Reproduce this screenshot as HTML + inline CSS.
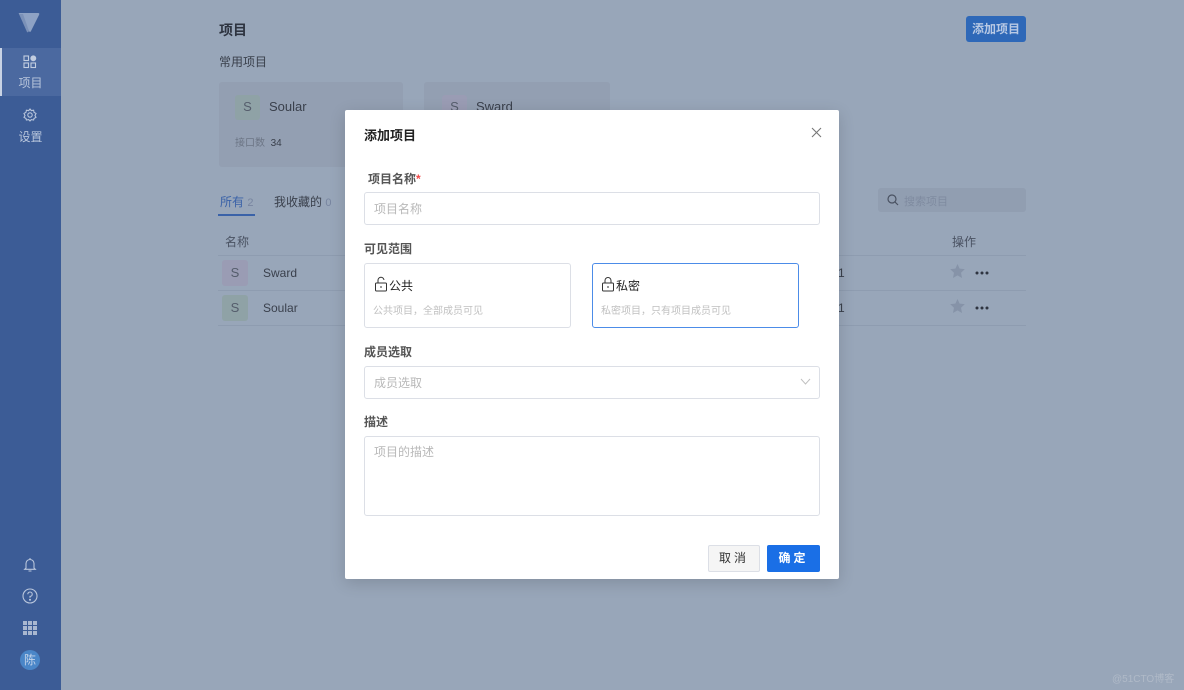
<!DOCTYPE html>
<html><head><meta charset="utf-8"><style>
*{box-sizing:border-box;margin:0;padding:0}
body{width:1184px;height:690px;overflow:hidden;position:relative;background:#98a6b9;font-family:"Liberation Sans","Noto Sans CJK SC",sans-serif;font-size:12px;color:#333}
.a{position:absolute}
.side{left:0;top:0;width:61px;height:690px;background:#3c5c96}
.ic{color:#b9c6dc;font-size:12px;text-align:center;width:61px}
.sq{width:24px;height:24px;border-radius:3px;text-align:center;line-height:24px;font-size:13px;color:#555d6c}
.line{height:1px;background:#8e9cb0;left:218px;width:808px}
.modal{left:345px;top:110px;width:494px;height:469px;background:#fff;border-radius:2px;box-shadow:0 4px 16px rgba(0,0,0,.15)}
.lab{font-size:12px;color:#555;font-weight:bold}
.inp{border:1px solid #dcdfe6;border-radius:3px;color:#b8b8b8;font-size:12px;padding-left:9px}
.dots{width:14px;height:4px}
</style></head><body>
<div class="a side"></div>
<svg class="a" style="left:17px;top:12px" width="24" height="22" viewBox="0 0 24 22"><path d="M2 2 Q1 1 3 1 L21 1 Q23 1 22 3 L14 19 Q13 21 12 19 Z" fill="#8ea2c4"/><path d="M2 2 L10 20 Q11 21 12 19 L6 2 Z" fill="#7b91b8"/></svg>
<div class="a" style="left:0;top:48px;width:61px;height:48px;background:#4b69a0"></div>
<div class="a" style="left:0;top:48px;width:2px;height:48px;background:#c9d3e4"></div>
<svg class="a" style="left:23px;top:55px" width="14" height="14" viewBox="0 0 14 14" fill="none" stroke="#c2cde0" stroke-width="1.1"><rect x="1" y="1" width="4.5" height="4.5"/><rect x="1" y="8" width="4.5" height="4.5"/><rect x="8" y="8" width="4.5" height="4.5"/><circle cx="10.3" cy="3.3" r="2.4" fill="#c2cde0"/></svg>
<div class="a ic" style="top:74px">项目</div>
<svg class="a" style="left:23px;top:108px" width="14" height="14" viewBox="0 0 14 14" fill="none" stroke="#b9c6dc" stroke-width="1.1"><circle cx="7" cy="7" r="2.2"/><path d="M7 1 L8.3 2.6 L10.6 2.2 L11 4.3 L13 5.5 L12 7.5 L13 9.3 L11 10.5 L10.6 12 L8.3 11.6 L7 13 L5.7 11.6 L3.4 12 L3 10.5 L1 9.3 L2 7.5 L1 5.5 L3 4.3 L3.4 2.2 L5.7 2.6 Z"/></svg>
<div class="a ic" style="top:128px">设置</div>
<svg class="a" style="left:23px;top:557px" width="14" height="16" viewBox="0 0 14 16" fill="none" stroke="#b9c6dc" stroke-width="1.1"><path d="M3 11 V6.5 A4 4 0 0 1 11 6.5 V11 L12.3 12.3 H1.7 Z M5.5 14 H8.5 M7 1 V2.3"/></svg>
<svg class="a" style="left:22px;top:588px" width="16" height="16" viewBox="0 0 16 16" fill="none" stroke="#b9c6dc" stroke-width="1.1"><circle cx="8" cy="8" r="7"/><path d="M5.8 6.2 A2.2 2.2 0 1 1 8 8.4 V9.8"/><circle cx="8" cy="11.8" r=".5" fill="#b9c6dc"/></svg>
<svg class="a" style="left:23px;top:621px" width="14" height="14" viewBox="0 0 14 14" fill="#a9b7d0"><rect x="0" y="0" width="4" height="4"/><rect x="5" y="0" width="4" height="4"/><rect x="10" y="0" width="4" height="4"/><rect x="0" y="5" width="4" height="4"/><rect x="5" y="5" width="4" height="4"/><rect x="10" y="5" width="4" height="4"/><rect x="0" y="10" width="4" height="4"/><rect x="5" y="10" width="4" height="4"/><rect x="10" y="10" width="4" height="4"/></svg>
<div class="a" style="left:20px;top:650px;width:20px;height:20px;border-radius:50%;background:#4a86c8;color:#c4d4ea;text-align:center;line-height:20px;font-size:12px">陈</div>

<div class="a" style="left:219px;top:20px;font-size:14px;font-weight:bold;color:#2e3440">项目</div>
<div class="a" style="left:219px;top:53px;font-size:12px;color:#3a404c">常用项目</div>
<div class="a" style="left:966px;top:16px;width:60px;height:26px;background:#2e68b8;border-radius:3px;color:#b8c9e4;text-align:center;line-height:26px;font-weight:bold">添加项目</div>
<div class="a" style="left:219px;top:82px;width:184px;height:85px;background:#939fb2;border-radius:3px"></div>
<div class="a" style="left:424px;top:82px;width:186px;height:85px;background:#939fb2;border-radius:3px"></div>
<div class="a sq" style="left:235px;top:95px;background:#8fa2a6;width:25px;height:25px">S</div>
<div class="a" style="left:269px;top:99px;font-size:13px;color:#3a404c">Soular</div>
<div class="a" style="left:235px;top:134px;font-size:10px;color:#6c7585">接口数 &nbsp;<span style="color:#3a404c">34</span></div>
<div class="a sq" style="left:442px;top:95px;background:#9a9cb4;width:25px;height:25px">S</div>
<div class="a" style="left:476px;top:99px;font-size:13px;color:#3a404c">Sward</div>

<div class="a" style="left:220px;top:193px;color:#3a62a8">所有 <span style="color:#7885a0;font-size:11px">2</span></div>
<div class="a" style="left:218px;top:214px;width:37px;height:2px;background:#3a62a8"></div>
<div class="a" style="left:274px;top:193px;color:#3a404c">我收藏的 <span style="color:#7885a0;font-size:11px">0</span></div>
<div class="a" style="left:878px;top:188px;width:148px;height:24px;background:#919eb1;border-radius:3px"></div>
<svg class="a" style="left:887px;top:194px" width="12" height="12" viewBox="0 0 12 12" fill="none" stroke="#4a5262" stroke-width="1.2"><circle cx="5" cy="5" r="4"/><path d="M8 8 L11 11"/></svg>
<div class="a" style="left:904px;top:193px;color:#7f8ba0;font-size:11px">搜索项目</div>
<div class="a" style="left:225px;top:233px;color:#4a5262">名称</div>
<div class="a" style="left:952px;top:233px;color:#4a5262">操作</div>
<div class="a line" style="top:255px"></div>
<div class="a line" style="top:290px"></div>
<div class="a line" style="top:325px"></div>
<div class="a sq" style="left:222px;top:260px;background:#9a9cb4;width:26px;height:26px;line-height:26px">S</div>
<div class="a" style="left:263px;top:266px;color:#3a404c">Sward</div>
<div class="a sq" style="left:222px;top:295px;background:#8fa2a6;width:26px;height:26px;line-height:26px">S</div>
<div class="a" style="left:263px;top:301px;color:#3a404c">Soular</div>
<div class="a" style="left:838px;top:266px;color:#3a404c">1</div>
<div class="a" style="left:838px;top:301px;color:#3a404c">1</div>
<svg class="a" style="left:950px;top:264px" width="15" height="14" viewBox="0 0 24 23"><path d="M12 0 L15.5 7.5 L24 8.5 L17.8 14.3 L19.4 23 L12 18.7 L4.6 23 L6.2 14.3 L0 8.5 L8.5 7.5 Z" fill="#8693a8"/></svg>
<svg class="a" style="left:950px;top:299px" width="15" height="14" viewBox="0 0 24 23"><path d="M12 0 L15.5 7.5 L24 8.5 L17.8 14.3 L19.4 23 L12 18.7 L4.6 23 L6.2 14.3 L0 8.5 L8.5 7.5 Z" fill="#8693a8"/></svg>
<svg class="a dots" style="left:975px;top:271px" viewBox="0 0 14 4" fill="#2e3440"><circle cx="2" cy="2" r="1.5"/><circle cx="7" cy="2" r="1.5"/><circle cx="12" cy="2" r="1.5"/></svg>
<svg class="a dots" style="left:975px;top:306px" viewBox="0 0 14 4" fill="#2e3440"><circle cx="2" cy="2" r="1.5"/><circle cx="7" cy="2" r="1.5"/><circle cx="12" cy="2" r="1.5"/></svg>

<div class="a modal"></div>
<div class="a" style="left:364px;top:125px;font-size:13px;font-weight:bold;color:#222">添加项目</div>
<svg class="a" style="left:811px;top:127px" width="11" height="11" viewBox="0 0 11 11" stroke="#777" stroke-width="1.1"><path d="M1 1 L10 10 M10 1 L1 10"/></svg>
<div class="a lab" style="left:368px;top:170px">项目名称<span style="color:#f04848">*</span></div>
<div class="a inp" style="left:364px;top:192px;width:456px;height:33px;line-height:33px">项目名称</div>
<div class="a lab" style="left:364px;top:240px">可见范围</div>
<div class="a" style="left:364px;top:263px;width:207px;height:65px;border:1px solid #dcdfe6;border-radius:3px"></div>
<div class="a" style="left:592px;top:263px;width:207px;height:65px;border:1px solid #4c8ce8;border-radius:3px"></div>
<svg class="a" style="left:374px;top:276px" width="14" height="16" viewBox="0 0 14 16" fill="none" stroke="#333" stroke-width="1"><rect x="1.5" y="7" width="11" height="8" rx="1"/><path d="M4 7 V4.5 A3 3 0 0 1 10 4"/><path d="M7 10 V12"/></svg>
<div class="a" style="left:389px;top:277px;color:#222">公共</div>
<div class="a" style="left:373px;top:302px;font-size:10px;color:#c0c0c0">公共项目，全部成员可见</div>
<svg class="a" style="left:601px;top:276px" width="14" height="16" viewBox="0 0 14 16" fill="none" stroke="#333" stroke-width="1"><rect x="1.5" y="7" width="11" height="8" rx="1"/><path d="M4 7 V4.5 A3 3 0 0 1 10 4.5 V7"/><path d="M7 10 V12"/></svg>
<div class="a" style="left:616px;top:277px;color:#222">私密</div>
<div class="a" style="left:601px;top:302px;font-size:10px;color:#c0c0c0">私密项目，只有项目成员可见</div>
<div class="a lab" style="left:364px;top:343px">成员选取</div>
<div class="a inp" style="left:364px;top:366px;width:456px;height:33px;line-height:33px">成员选取</div>
<svg class="a" style="left:800px;top:378px" width="11" height="7" viewBox="0 0 11 7" fill="none" stroke="#c0c0c0" stroke-width="1"><path d="M1 1 L5.5 6 L10 1"/></svg>
<div class="a lab" style="left:364px;top:413px">描述</div>
<div class="a inp" style="left:364px;top:436px;width:456px;height:80px;padding-top:6px">项目的描述</div>
<div class="a" style="left:708px;top:545px;width:52px;height:27px;border:1px solid #dcdfe6;background:#f5f5f5;border-radius:2px;text-align:center;line-height:25px;color:#333;letter-spacing:3px">取消</div>
<div class="a" style="left:767px;top:545px;width:53px;height:27px;background:#1a6fe6;border-radius:2px;text-align:center;line-height:27px;color:#fff;font-weight:bold;letter-spacing:3px">确定</div>
<div class="a" style="left:1112px;top:670px;font-size:10px;color:#b0bac8">@51CTO博客</div>
</body></html>
